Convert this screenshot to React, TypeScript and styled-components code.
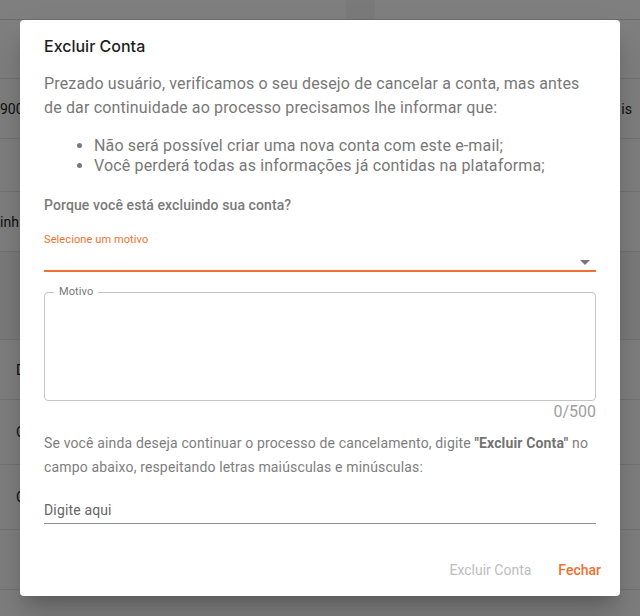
import React from "react";
import styled, { createGlobalStyle } from "styled-components";

const Global = createGlobalStyle`
  html, body { margin: 0; padding: 0; }
  body { width: 640px; height: 616px; overflow: hidden; background: #fff; font-family: Roboto, "Liberation Sans", sans-serif; }
  * { box-sizing: border-box; }
`;

const Page = styled.div`
  position: relative;
  width: 640px;
  height: 616px;
  overflow: hidden;
  background: #fff;
`;

const Table = styled.div`
  display: flex;
  flex-direction: column;
`;

const BgRow = styled.div<{ $h: number; $shade?: boolean }>`
  height: ${(p) => p.$h}px;
  border-bottom: 1px solid #e6e6e6;
  background: ${(p) => (p.$shade ? "#f7f7f7" : "#fff")};
  display: flex;
  align-items: center;
  justify-content: space-between;
  font-family: Roboto, sans-serif;
  font-size: 14px;
  color: #222;
`;

const BgCell = styled.span<{ $indent?: number; $end?: number }>`
  padding-left: ${(p) => p.$indent ?? 0}px;
  padding-right: ${(p) => p.$end ?? 0}px;
`;

const HeaderRow = styled.div`
  height: 20px;
  border-bottom: 1px solid #d8d8d8;
  display: grid;
  grid-template-columns: 346px 29px 1fr;
`;

const HeaderSep = styled.div`
  background: #f4f4f4;
`;

const Overlay = styled.div`
  position: absolute;
  inset: 0;
  background: rgba(0, 0, 0, 0.5);
  display: flex;
  align-items: flex-start;
  justify-content: center;
  padding-top: 20px;
`;

const Dialog = styled.div`
  width: 600px;
  height: 576px;
  background: #fff;
  border-radius: 4px;
  box-shadow: 0 11px 15px -7px rgba(0,0,0,0.2), 0 24px 38px 3px rgba(0,0,0,0.14);
  display: flex;
  flex-direction: column;
`;

const Title = styled.h2`
  margin: 0;
  padding: 16px 24px 16px;
  font-family: Inter, sans-serif;
  font-weight: 500;
  font-size: 16px;
  line-height: 20px;
  color: #1e1e1e;
`;

const Content = styled.div`
  padding: 0 24px;
  flex: 1;
  display: flex;
  flex-direction: column;
`;

const Lead = styled.p`
  margin: 0;
  font-family: Roboto, sans-serif;
  font-size: 16px;
  line-height: 24px;
  letter-spacing: 0.15px;
  color: #787878;
`;

const List = styled.ul`
  margin: 16px 0 0;
  padding-left: 50px;
  font-family: Roboto, sans-serif;
  font-size: 16px;
  line-height: 20px;
  letter-spacing: 0.15px;
  color: #787878;
`;

const Question = styled.p`
  margin: 19px 0 0;
  font-family: Roboto, sans-serif;
  font-weight: 500;
  font-size: 14px;
  line-height: 20px;
  letter-spacing: 0.1px;
  color: #7a7a7a;
`;

const SelectField = styled.div`
  margin-top: 18px;
  display: flex;
  flex-direction: column;
`;

const SmallLabel = styled.span`
  font-family: Roboto, sans-serif;
  font-size: 11px;
  line-height: 14px;
  letter-spacing: 0.1px;
  color: #f07030;
`;

const SelectBox = styled.div`
  height: 25px;
  border-bottom: 2px solid #f07030;
  display: flex;
  align-items: center;
  justify-content: flex-end;
  padding: 7px 6px 0 0;
`;

const Arrow = styled.span`
  width: 0;
  height: 0;
  border-left: 5px solid transparent;
  border-right: 5px solid transparent;
  border-top: 5px solid #757575;
`;

const Outlined = styled.div`
  position: relative;
  margin-top: 20px;
  height: 109px;
  border: 1px solid #c4c4c4;
  border-radius: 4px;
`;

const Legend = styled.span`
  position: absolute;
  top: -8px;
  left: 9px;
  padding: 0 5px;
  background: #fff;
  font-family: Roboto, sans-serif;
  font-size: 11px;
  line-height: 14px;
  letter-spacing: 0.1px;
  color: #777;
`;

const Counter = styled.div`
  margin-top: 1px;
  text-align: right;
  font-family: Roboto, sans-serif;
  font-size: 16px;
  line-height: 20px;
  color: #a0a0a0;
`;

const Note = styled.p`
  margin: 9px 0 0;
  font-family: Roboto, sans-serif;
  font-size: 14px;
  line-height: 24px;
  letter-spacing: 0.15px;
  color: #7e7e7e;
`;

const Emphasis = styled.strong`
  font-weight: 700;
  color: #747474;
`;

const TextField = styled.div`
  margin-top: 17px;
  height: 28px;
  border-bottom: 1px solid #8f8f8f;
  display: flex;
  align-items: center;
  font-family: Roboto, sans-serif;
  font-size: 14px;
  letter-spacing: 0.15px;
  color: #666;
`;

const Actions = styled.div`
  display: flex;
  justify-content: flex-end;
  align-items: flex-end;
  gap: 11px;
  padding: 0 11px 8px 24px;
  flex: 0 0 72px;
`;

const ActionButton = styled.button<{ $tone: "disabled" | "primary" }>`
  border: 0;
  background: none;
  padding: 6px 8px;
  font-family: Roboto, sans-serif;
  font-size: 14px;
  line-height: 24px;
  letter-spacing: 0;
  font-weight: ${(p) => (p.$tone === "primary" ? 500 : 400)};
  color: ${(p) => (p.$tone === "primary" ? "#f07030" : "#bdbdbd")};
  cursor: ${(p) => (p.$tone === "primary" ? "pointer" : "default")};
`;

export default function App() {
  return (
    <Page>
      <Global />
      <Table>
        <HeaderRow>
          <div />
          <HeaderSep />
          <div />
        </HeaderRow>
        <BgRow $h={59} />
        <BgRow $h={60}>
          <BgCell>900</BgCell>
          <BgCell $end={8}>is</BgCell>
        </BgRow>
        <BgRow $h={53} />
        <BgRow $h={60}>
          <BgCell>inh</BgCell>
        </BgRow>
        <BgRow $h={88} $shade />
        <BgRow $h={60}>
          <BgCell $indent={16}>D</BgCell>
        </BgRow>
        <BgRow $h={65}>
          <BgCell $indent={16}>C</BgCell>
        </BgRow>
        <BgRow $h={65}>
          <BgCell $indent={16}>C</BgCell>
        </BgRow>
        <BgRow $h={60} />
      </Table>
      <Overlay>
        <Dialog role="dialog">
          <Title>Excluir Conta</Title>
          <Content>
            <Lead>
              Prezado usuário, verificamos o seu desejo de cancelar a conta, mas antes de dar continuidade ao
              processo precisamos lhe informar que:
            </Lead>
            <List>
              <li>Não será possível criar uma nova conta com este e-mail;</li>
              <li>Você perderá todas as informações já contidas na plataforma;</li>
            </List>
            <Question>Porque você está excluindo sua conta?</Question>
            <SelectField>
              <SmallLabel>Selecione um motivo</SmallLabel>
              <SelectBox>
                <Arrow />
              </SelectBox>
            </SelectField>
            <Outlined>
              <Legend>Motivo</Legend>
            </Outlined>
            <Counter>0/500</Counter>
            <Note>
              Se você ainda deseja continuar o processo de cancelamento, digite <Emphasis>"Excluir Conta"</Emphasis>{" "}
              no campo abaixo, respeitando letras maiúsculas e minúsculas:
            </Note>
            <TextField>Digite aqui</TextField>
          </Content>
          <Actions>
            <ActionButton $tone="disabled" disabled>
              Excluir Conta
            </ActionButton>
            <ActionButton $tone="primary">Fechar</ActionButton>
          </Actions>
        </Dialog>
      </Overlay>
    </Page>
  );
}
